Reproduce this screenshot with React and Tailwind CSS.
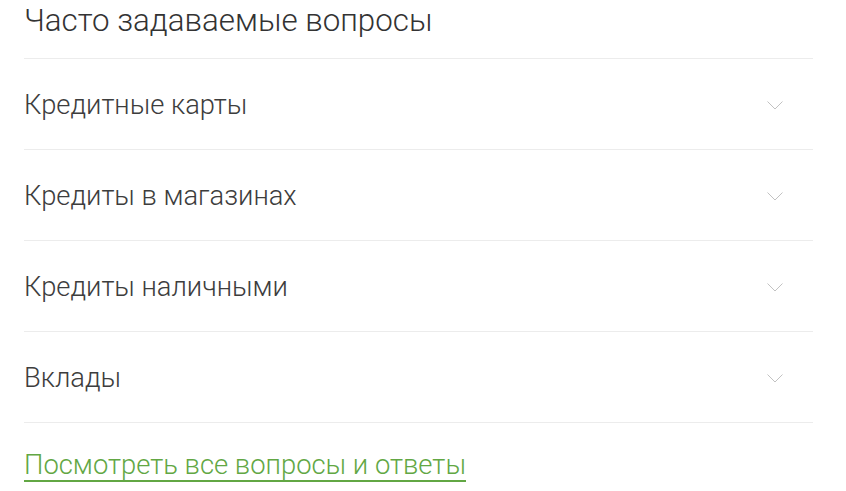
import React from 'react';

const items = ['Кредитные карты', 'Кредиты в магазинах', 'Кредиты наличными', 'Вклады'];

const Chevron = () => (
  <svg width="16" height="9" viewBox="0 0 16 9" fill="none" className="text-[#c2c2c2]">
    <path d="M0.5 0.5 L8 8 L15.5 0.5" stroke="currentColor" strokeWidth="1" />
  </svg>
);

export default function App() {
  return (
    <div className="bg-white w-[846px] h-[491px] overflow-hidden font-['Roboto',sans-serif] font-light">
      <div className="ml-6 w-[789px]">
        <h2 className="h-[59px] text-[31.3px] leading-[42px] text-[#333333] border-b border-[#ececec]">
          Часто задаваемые вопросы
        </h2>
        {items.map((label) => (
          <div
            key={label}
            className="h-[91px] flex items-center justify-between border-b border-[#ececec] text-[27.3px] text-[#3d3d3d]"
          >
            <span className="mt-[2px]">{label}</span>
            <span className="mr-[30px] mt-[3px] flex items-center">
              <Chevron />
            </span>
          </div>
        ))}
        <div className="pt-[27px]">
          <a href="#" className="inline-block text-[27.4px] leading-[30px] text-[#62a744] border-b-2 border-[#62a744]">
            Посмотреть все вопросы и ответы
          </a>
        </div>
      </div>
    </div>
  );
}
